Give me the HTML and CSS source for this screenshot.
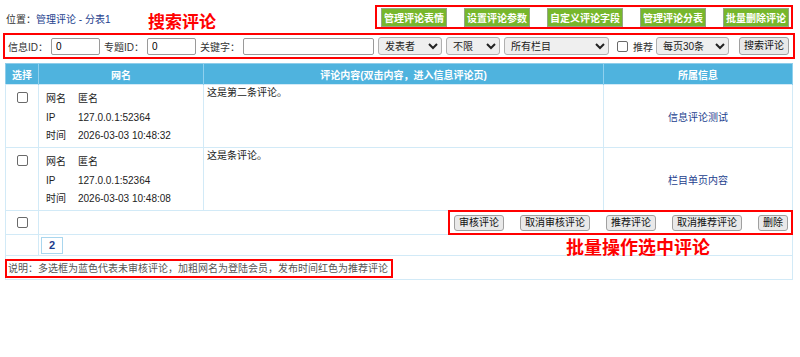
FILE: index.html
```html
<!DOCTYPE html>
<html lang="zh-CN">
<head>
    <meta charset="UTF-8">
    <title>管理评论</title>
    <link rel="stylesheet" href="styles.css">
</head>
<body>
    <div class="page">
        <div class="topbar">
            <div class="position">位置：<a href="#">管理评论 - 分表1</a></div>
            <div class="tools">
                <button class="green-btn">管理评论表情</button>
                <button class="green-btn">设置评论参数</button>
                <button class="green-btn">自定义评论字段</button>
                <button class="green-btn">管理评论分表</button>
                <button class="green-btn">批量删除评论</button>
            </div>
        </div>

        <form class="search">
            <label>信息ID：</label>
            <input type="text" class="id-input" value="0">
            <label>专题ID：</label>
            <input type="text" class="id-input" value="0">
            <label>关键字：</label>
            <input type="text" class="kw-input" value="">
            <select class="sel-who"><option>发表者</option></select>
            <select class="sel-state"><option>不限</option></select>
            <select class="sel-class"><option>所有栏目</option></select>
            <input type="checkbox" class="check">
            <label class="good-label">推荐</label>
            <select class="sel-page"><option>每页30条</option></select>
            <button type="button" class="btn search-btn">搜索评论</button>
        </form>

        <table class="list">
            <tr>
                <th class="col-check">选择</th>
                <th class="col-user">网名</th>
                <th class="col-content">评论内容(双击内容，进入信息评论页)</th>
                <th>所属信息</th>
            </tr>
            <tr class="item">
                <td class="cell-check"><input type="checkbox" class="check"></td>
                <td class="cell-user">
                    <div><span class="key">网名</span>匿名</div>
                    <div><span class="key">IP</span>127.0.0.1:52364</div>
                    <div><span class="key">时间</span>2026-03-03 10:48:32</div>
                </td>
                <td class="cell-content">这是第二条评论。</td>
                <td class="cell-info"><a href="#">信息评论测试</a></td>
            </tr>
            <tr class="item">
                <td class="cell-check"><input type="checkbox" class="check"></td>
                <td class="cell-user">
                    <div><span class="key">网名</span>匿名</div>
                    <div><span class="key">IP</span>127.0.0.1:52364</div>
                    <div><span class="key">时间</span>2026-03-03 10:48:08</div>
                </td>
                <td class="cell-content">这是条评论。</td>
                <td class="cell-info"><a href="#">栏目单页内容</a></td>
            </tr>
            <tr class="batch-row">
                <td class="cell-check-mid"><input type="checkbox" class="check"></td>
                <td colspan="3" class="cell-batch">
                    <div class="batch">
                        <button class="btn">审核评论</button>
                        <button class="btn">取消审核评论</button>
                        <button class="btn">推荐评论</button>
                        <button class="btn">取消推荐评论</button>
                        <button class="btn">删除</button>
                    </div>
                </td>
            </tr>
            <tr class="page-row">
                <td></td>
                <td colspan="3" class="cell-pages"><span class="page-num">2</span></td>
            </tr>
            <tr>
                <td colspan="4" class="cell-note"><span class="note">说明：多选框为蓝色代表未审核评论，加粗网名为登陆会员，发布时间红色为推荐评论</span></td>
            </tr>
        </table>

        <span class="mark mark-search">搜索评论</span>
        <span class="mark mark-batch">批量操作选中评论</span>
    </div>
</body>
</html>
```

FILE: styles.css
```css
body {
    margin: 0;
    font-family: "Liberation Sans", "Noto Sans CJK SC", sans-serif;
    font-size: 10px;
    color: #333;
    background-color: #fff;
}
.page {
    position: relative;
    width: 788px;
    margin-left: 5px;
}
a {
    color: #23408e;
    text-decoration: none;
}
.topbar {
    display: flex;
    align-items: center;
    padding-top: 5px;
    margin-bottom: 6px;
}
.position {
    padding-left: 1px;
    padding-top: 2px;
}
.tools {
    display: flex;
    gap: 17px;
    margin-left: auto;
    padding: 1px 2px 0 4px;
    border: 2px solid #f00;
}
.green-btn {
    height: 19px;
    padding: 0 2px;
    border: 1px solid #93a784;
    background-color: #77b72c;
    color: #fff;
    font-family: inherit;
    font-size: 10px;
    font-weight: bold;
    cursor: pointer;
}
.search {
    display: flex;
    align-items: center;
    height: 22px;
    margin: 0 0 6px;
    padding-left: 3px;
    outline: 2px solid #f00;
}
.search label {
    margin-right: 3px;
}
.search input[type="text"] {
    box-sizing: border-box;
    height: 17px;
    margin-right: 4px;
    padding: 0 4px;
    border: 1px solid #9a9a9a;
    border-radius: 2px;
    font-family: inherit;
    font-size: 10px;
}
.id-input {
    width: 49px;
}
.kw-input {
    width: 131px;
}
.search select {
    box-sizing: border-box;
    height: 18px;
    margin-right: 4px;
    padding: 0 2px;
    border: 1px solid #b0b0b0;
    border-radius: 3px;
    background-color: #efefef;
    font-family: inherit;
    font-size: 10px;
    color: #222;
}
.sel-who {
    width: 64px;
}
.sel-state {
    width: 54px;
}
.sel-class {
    width: 105px;
}
.sel-page {
    width: 73px;
    margin-right: 10px !important;
}
.search .check {
    margin: 0 5px 0 4px;
}
.btn {
    height: 16px;
    padding: 0 4px;
    border: 1px solid #a0a0a0;
    border-radius: 3px;
    background-color: #e9e9e9;
    color: #111;
    font-family: inherit;
    font-size: 10px;
    line-height: 14px;
    cursor: pointer;
}
.search-btn {
    width: 50px;
    height: 18px;
    padding: 0;
}
.check {
    appearance: none;
    box-sizing: border-box;
    width: 11px;
    height: 11px;
    margin: 0;
    border: 1.5px solid #6a6a6a;
    border-radius: 2px;
    background-color: #fff;
    vertical-align: middle;
}
.list {
    width: 100%;
    border-collapse: collapse;
    border: 1px solid #8fcdea;
}
.list th {
    height: 20px;
    padding: 0;
    background-color: #4fb3de;
    color: #fff;
    font-weight: bold;
    border-right: 1px solid #8fd0ee;
}
.list td {
    padding: 0;
    border: 1px solid #d2eaf7;
    vertical-align: top;
}
.col-check {
    width: 32px;
}
.col-user {
    width: 164px;
}
.col-content {
    width: 399px;
}
.item {
    height: 63px;
}
.cell-check {
    padding-top: 6px !important;
    text-align: center;
}
.cell-user {
    padding: 5px 7px 0 !important;
    color: #222;
}
.cell-user div {
    line-height: 18.5px;
}
.key {
    display: inline-block;
    width: 32px;
}
.cell-content {
    padding: 1px 3px 0 !important;
    line-height: 14px;
    color: #222;
}
.list .cell-info {
    vertical-align: middle;
    text-align: center;
}
.batch-row {
    height: 24px;
}
.list .cell-check-mid {
    vertical-align: middle;
    text-align: center;
}
.list .cell-batch {
    vertical-align: middle;
    text-align: right;
    padding-right: 1px;
}
.batch {
    display: inline-flex;
    gap: 16px;
    padding: 3px 3px 2px 4px;
    outline: 2px solid #f00;
}
.page-row {
    height: 21px;
}
.list .cell-pages {
    vertical-align: middle;
    padding-left: 2px;
}
.page-num {
    display: inline-block;
    width: 20px;
    height: 15px;
    border: 1px solid #a9d6ee;
    color: #1d3c8c;
    font-size: 11px;
    font-weight: bold;
    line-height: 15px;
    text-align: center;
}
.list .cell-note {
    padding: 5px 0 3px 1px;
}
.note {
    display: inline-block;
    box-sizing: border-box;
    width: 384px;
    height: 15px;
    padding-left: 1px;
    line-height: 15px;
    color: #555;
    outline: 2px solid #f00;
}
.mark {
    position: absolute;
    color: #f00;
    font-family: "Noto Sans CJK SC", sans-serif;
    font-weight: bold;
}
.mark-search {
    left: 143px;
    top: 12px;
    font-size: 17px;
    line-height: 18px;
}
.mark-batch {
    left: 561px;
    top: 237px;
    font-size: 18px;
    line-height: 18px;
}
```
